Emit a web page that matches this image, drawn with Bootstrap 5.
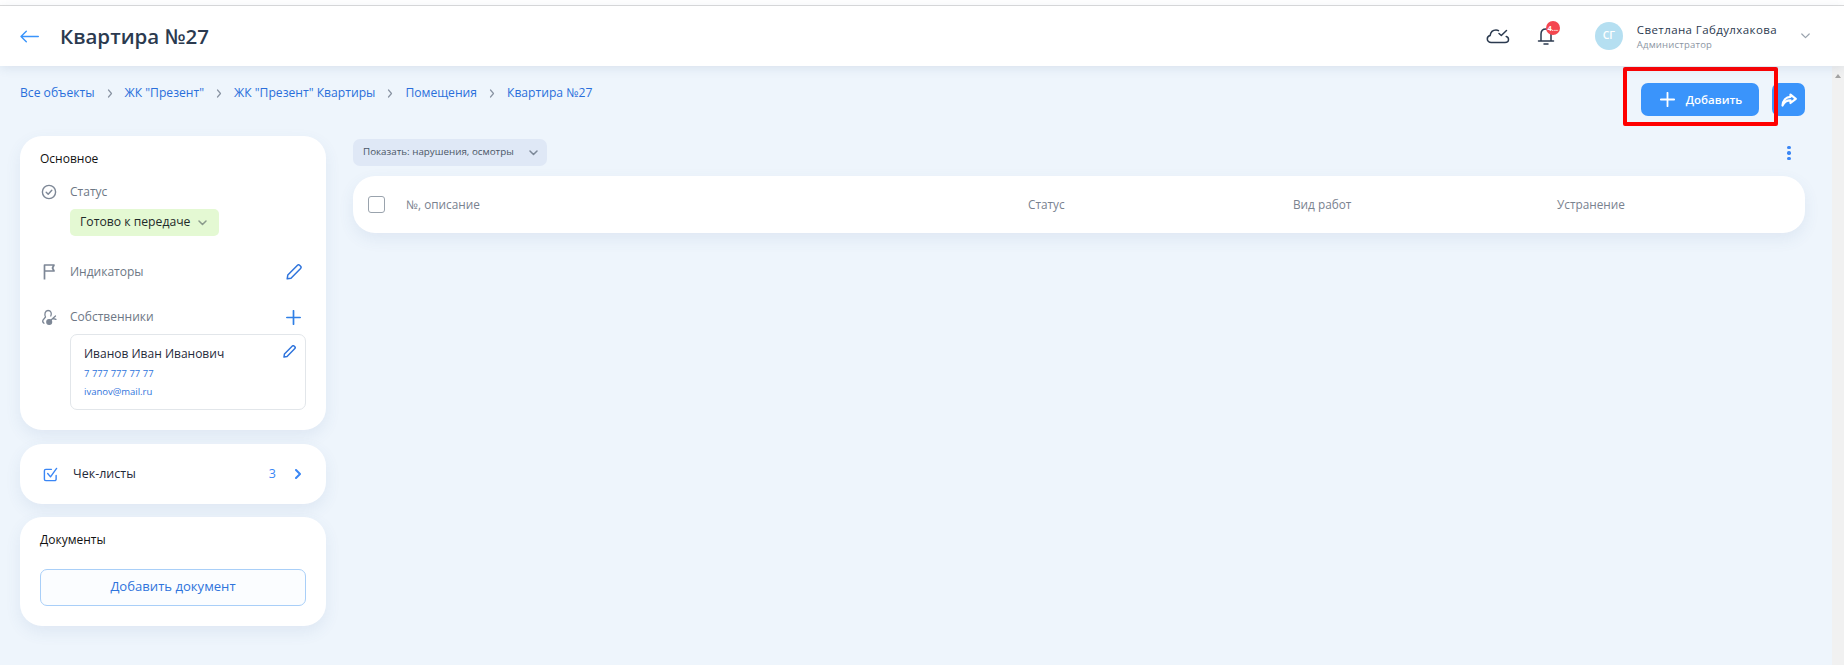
<!doctype html>
<html lang="ru"><head><meta charset="utf-8"><title>Квартира №27</title>
<link href="https://cdn.jsdelivr.net/npm/bootstrap@5.3.0/dist/css/bootstrap.min.css" rel="stylesheet">
<style>
html,body{height:665px;overflow:hidden}
body{font-family:"Open Sans","Noto Sans",sans-serif;background:#fff;color:#1f2a3a;font-size:13px}
a{text-decoration:none}
.topline{height:6px;border-bottom:1px solid #dcdcdc;background:#fff}
.hdr{height:60px;background:#fff;padding:0 0 0 20px;box-shadow:0 2px 10px rgba(60,90,130,.12);position:relative;z-index:2}
.hdr-title{font-size:20.5px;font-weight:600;color:#2b3a4f;margin:0 0 0 21px;line-height:1}
.hdr-right{margin-left:auto;padding-right:34px}
.notif{position:relative;margin-left:24px;width:24px;height:24px}
.notif-badge{position:absolute;top:-3px;left:12px;width:14px;height:14px;border-radius:50%;background:#f4474f;color:#fff;font-size:7.5px;font-weight:700;line-height:14px;text-align:center}
.avatar{width:28px;height:28px;border-radius:50%;background:#b5dff1;color:#fff;font-size:10.5px;font-weight:600;margin-left:37px}
.uinfo{margin-left:14px}
.uname{font-size:11.5px;color:#2b3a4f;line-height:16px;letter-spacing:.4px}
.urole{font-size:9.5px;color:#8b95a3;line-height:13px;letter-spacing:.2px}
.wrap{height:599px}
.mainarea{flex:1 1 auto;min-width:0;background:#eef5fc;padding:0 27px 0 20px;position:relative}
.sbar{width:12px;background:#f1f1f1;position:relative}
.sbar-up{position:absolute;left:3px;top:8px;width:0;height:0;border-left:3.5px solid transparent;border-right:3.5px solid transparent;border-bottom:4px solid #a3a3a3}
.toprow{height:70px;padding-top:17px}
.crumbs{font-size:12.13px;line-height:20px;gap:12px}
.crumbs a{color:#2a6fdb}
.crumb-sep{width:6px;height:9px;color:#8a94a3}
.btn-add{width:118px;height:33px;background:#3a94fb;color:#fff;border:0;border-radius:7px;font-size:11.5px;font-weight:600;padding:0 0 0 2px;gap:11px}
.btn-add:hover{background:#3a94fb;color:#fff}
.btn-share{width:33px;height:33px;background:#3a94fb;border:0;border-radius:7px;margin-left:13px;padding:0}
.redbox{position:absolute;left:1623px;top:1px;width:155px;height:59px;border:4px solid #f00;border-radius:2px;pointer-events:none}
.cols{gap:27px}
.side{width:306px;flex:none}
.panel{background:#fff;border-radius:22px;box-shadow:0 6px 16px rgba(70,100,150,.09)}
.p-main{height:294px;padding:14px 20px;margin-bottom:14px}
.p-label{font-size:12px;color:#111;line-height:18px}
.row-lbl{font-size:12px;color:#6d7785;line-height:18px}
.ic-col{width:30px;flex:none;display:flex}
.ic-s1{margin-left:1px}.ic-s3{margin-left:3px}
.st-row{margin-top:15px}.ind-row{margin-top:27px}
.sta{width:149px;height:27px;background:#e4f9d3;border-radius:5px;margin-left:30px;font-size:12.2px;color:#1f2a2a;padding:0 12px 0 10px;margin-top:8px}
.pen{margin-right:4px}.plus{margin-right:5px}
.owner{margin-left:30px;height:76px;margin-top:8px;border:1px solid #e2e6ea;border-radius:7px;padding:10px 13px;position:relative}
.owner-name{font-size:12px;line-height:18px;color:#1f2a3a}
.owner-link{font-size:9.5px;line-height:18px;color:#2f74dc;display:block}
.owner-link.ph{margin-top:2px}
.owner-edit{position:absolute;right:9px;top:10px}
.p-check{height:60px;padding:0 25px 0 23px;margin-bottom:13px}
.chk-l{font-size:12.5px;color:#1f2a3a;margin-left:15px}
.chk-n{font-size:12.5px;color:#3a86f5;margin-left:auto;margin-right:19px}
.p-docs{height:109px;padding:14px 20px}
.btn-doc{width:100%;height:37px;background:#fbfdff;border:1px solid #a9cff8;border-radius:7px;color:#2f74dc;font-size:13.1px;font-weight:500;margin-top:20px;padding:0 0 2px}
.btn-doc:hover{background:#fbfdff;color:#2f74dc;border-color:#a9cff8}
.content{flex:1 1 auto;min-width:0}
.filter-row{height:40px;padding-top:3px}
.fil{width:194px;height:27px;background:#dfe8f6;border-radius:7px;font-size:9.8px;color:#4a5666;padding:0 9px 0 10px}
.dots{margin-left:auto;margin-right:14px;margin-top:7px;gap:2px;width:4px}
.dots i{display:block;width:3.4px;height:3.4px;border-radius:50%;background:#3a86f5}
.tbl{height:57px;background:#fff;border-radius:22px;box-shadow:0 6px 16px rgba(70,100,150,.09);font-size:11.8px;color:#79828f;position:relative}
.cbx{width:17px;height:17px;border:1px solid #9aa3ad;border-radius:3px;margin-left:15px;background:#fff}
.col1{width:622px;margin-left:21px}.col2{width:265px}.col3{width:264px}
</style></head><body>
<div class="topline"></div>
<header class="hdr d-flex align-items-center">
<svg width="19" height="13" viewBox="0 0 19 13" fill="none" stroke="#3a94fb" stroke-width="1.4" stroke-linecap="round" stroke-linejoin="round"><path d="M18.300 6.500H1M6.300 1.200 1 6.500l5.300 5.300"/></svg>
<h1 class="hdr-title">Квартира №27</h1>
<div class="hdr-right d-flex align-items-center">
<svg width="24" height="18" viewBox="0 0 24 18" fill="none" stroke="#2b3a4f" stroke-width="1.500" stroke-linecap="round" stroke-linejoin="round"><path d="M7 15.500H5.200C3 15.500 1.300 14 1.300 12c0-1.700 1-3 2.800-3.400C4.600 5.300 7 3 10 3c1 0 1.800.2 2.500.6M7 15.500h12c2 0 3.500-1.200 3.500-3 0-1.500-1-2.700-2.300-3M13 6.500l2.300 2L20.500 3.500"/></svg>
<div class="notif d-flex align-items-center justify-content-center">
<svg width="18" height="20" viewBox="0 0 18 20" fill="none" stroke="#2b3a4f" stroke-width="1.500" stroke-linecap="round" stroke-linejoin="round"><path d="M4 14.500V8c0-3 2-5 5-5s5 2 5 5v6.500M1.500 15h15M7 18h4"/></svg>
<span class="notif-badge">4...</span></div>
<div class="avatar d-flex align-items-center justify-content-center">СГ</div>
<div class="uinfo"><div class="uname">Светлана Габдулхакова</div><div class="urole">Администратор</div></div>
<svg class="ms-4" width="9" height="6" viewBox="0 0 9 6" fill="none" stroke="#9aa3ad" stroke-width="1.200" stroke-linecap="round" stroke-linejoin="round"><path d="M.8 1 4.500 4.600 8.200 1"/></svg>
</div></header>
<div class="wrap d-flex">
<main class="mainarea">
<div class="toprow d-flex align-items-start">
<nav class="crumbs d-flex align-items-center">
<a href="#">Все объекты</a><svg class="crumb-sep" viewBox="0 0 6 9" fill="none" stroke="currentColor" stroke-width="1.200" stroke-linecap="round" stroke-linejoin="round"><path d="m1.500 1 3 3.500-3 3.500"/></svg>
<a href="#">ЖК "Презент"</a><svg class="crumb-sep" viewBox="0 0 6 9" fill="none" stroke="currentColor" stroke-width="1.200" stroke-linecap="round" stroke-linejoin="round"><path d="m1.500 1 3 3.500-3 3.500"/></svg>
<a href="#">ЖК "Презент" Квартиры</a><svg class="crumb-sep" viewBox="0 0 6 9" fill="none" stroke="currentColor" stroke-width="1.200" stroke-linecap="round" stroke-linejoin="round"><path d="m1.500 1 3 3.500-3 3.500"/></svg>
<a href="#">Помещения</a><svg class="crumb-sep" viewBox="0 0 6 9" fill="none" stroke="currentColor" stroke-width="1.200" stroke-linecap="round" stroke-linejoin="round"><path d="m1.500 1 3 3.500-3 3.500"/></svg>
<a href="#">Квартира №27</a></nav>
<div class="ms-auto d-flex">
<button class="btn btn-add d-flex align-items-center justify-content-center" type="button"><svg width="15" height="15" viewBox="0 0 15 15" fill="none" stroke="#fff" stroke-width="1.800" stroke-linecap="round"><path d="M7.500 .8v13.400M.8 7.500h13.400"/></svg>Добавить</button>
<button class="btn btn-share d-flex align-items-center justify-content-center" type="button" aria-label="Поделиться"><svg width="16" height="14" viewBox="0 0 16 14" fill="none" stroke="#fff" stroke-width="2.200" stroke-linejoin="round"><path d="M9.500 1.500 14.800 5.800 9.500 10V7.400C6 7.300 3.500 8.500 1.500 12.500 2 7.500 5 4 9.500 3.800Z"/></svg></button>
</div></div>
<div class="redbox"></div>
<div class="cols d-flex">
<aside class="side d-flex flex-column">
<section class="panel p-main">
<div class="p-label">Основное</div>
<div class="d-flex align-items-center st-row"><span class="ic-col"><svg class="ic-s1" width="16" height="16" viewBox="0 0 16 16" fill="none" stroke="#7d8796" stroke-width="1.400" stroke-linecap="round" stroke-linejoin="round"><circle cx="8" cy="8" r="6.600"/><path d="m5.200 8.200 2 2 3.600-4"/></svg></span><span class="row-lbl">Статус</span></div>
<div class="sta d-flex align-items-center justify-content-between">Готово к передаче<svg width="9" height="6" viewBox="0 0 9 6" fill="none" stroke="#8a9a8c" stroke-width="1.500" stroke-linecap="round" stroke-linejoin="round"><path d="M1 1l3.500 3.500L8 1"/></svg></div>
<div class="d-flex align-items-center ind-row"><span class="ic-col"><svg class="ic-s3" width="12" height="16" viewBox="0 0 12 16" fill="none" stroke="#7d8796" stroke-width="1.700" stroke-linejoin="round"><path d="M1.500 15.500V1H11l-1.500 3L11 7H1.500"/></svg></span><span class="row-lbl">Индикаторы</span><svg class="ms-auto pen" width="16" height="16" viewBox="0 0 16 16" fill="none" stroke="#2f74dc" stroke-width="1.500" stroke-linejoin="round"><path d="M1.200 14.800 1.800 11 11.500 1.300a1.500 1.500 0 0 1 2.100 0l1 1a1.500 1.500 0 0 1 0 2.100L5 14.200Z"/></svg></div>
<div class="d-flex align-items-center ind-row"><span class="ic-col"><svg class="ic-s1" width="17" height="17" viewBox="0 0 17 17" fill="none" stroke="#7d8796" stroke-width="1.300" stroke-linecap="round"><path d="M4.500 8C3.200 5.500 4 1.500 7 1.500s4 3 2.800 5.500M4.500 8 2 11c-.5 1 0 2.500 1 3.200"/><circle cx="8.200" cy="13" r="2.400" fill="#7d8796"/><path d="m9.500 11.500 5-4.500M12 9.500l3 .8"/></svg></span><span class="row-lbl">Собственники</span><svg class="ms-auto plus" width="15" height="15" viewBox="0 0 15 15" fill="none" stroke="#2f7fe6" stroke-width="1.700" stroke-linecap="round"><path d="M7.500 .8v13.400M.8 7.500h13.400"/></svg></div>
<div class="owner"><div class="owner-name">Иванов Иван Иванович</div><a class="owner-link ph" href="#">7 777 777 77 77</a><a class="owner-link" href="#">ivanov@mail.ru</a>
<svg class="owner-edit" width="13" height="13" viewBox="0 0 16 16" fill="none" stroke="#2f74dc" stroke-width="1.800" stroke-linejoin="round"><path d="M1.200 14.800 1.800 11 11.500 1.300a1.500 1.500 0 0 1 2.100 0l1 1a1.500 1.500 0 0 1 0 2.100L5 14.200Z"/></svg></div>
</section>
<section class="panel p-check d-flex align-items-center">
<svg width="15" height="15" viewBox="0 0 16 16" fill="none" stroke="#3a86f5" stroke-width="1.500" stroke-linecap="round" stroke-linejoin="round"><path d="M9 2.500H3A1.500 1.500 0 0 0 1.500 4v9A1.500 1.500 0 0 0 3 14.500h9.500A1.500 1.500 0 0 0 14 13V9M5 7l3 3.500L14.500 1.500"/></svg>
<span class="chk-l">Чек-листы</span><span class="chk-n">3</span>
<svg width="6" height="10" viewBox="0 0 6 10" fill="none" stroke="#3a86f5" stroke-width="2" stroke-linecap="round" stroke-linejoin="round"><path d="m1 1 4 4-4 4"/></svg>
</section>
<section class="panel p-docs">
<div class="p-label">Документы</div>
<button class="btn btn-doc" type="button">Добавить документ</button>
</section>
</aside>
<section class="content">
<div class="filter-row d-flex align-items-start">
<div class="fil d-flex align-items-center justify-content-between">Показать: нарушения, осмотры<svg width="9" height="6" viewBox="0 0 9 6" fill="none" stroke="#7c8898" stroke-width="1.500" stroke-linecap="round" stroke-linejoin="round"><path d="M1 1l3.500 3.500L8 1"/></svg></div>
<div class="dots d-flex flex-column align-items-center"><i></i><i></i><i></i></div>
</div>
<div class="tbl d-flex align-items-center">
<span class="cbx"></span><span class="col1">№, описание</span><span class="col2">Статус</span><span class="col3">Вид работ</span><span>Устранение</span>
</div>
</section>
</div>
</main>
<div class="sbar"><span class="sbar-up"></span></div>
</div>
</body></html>
